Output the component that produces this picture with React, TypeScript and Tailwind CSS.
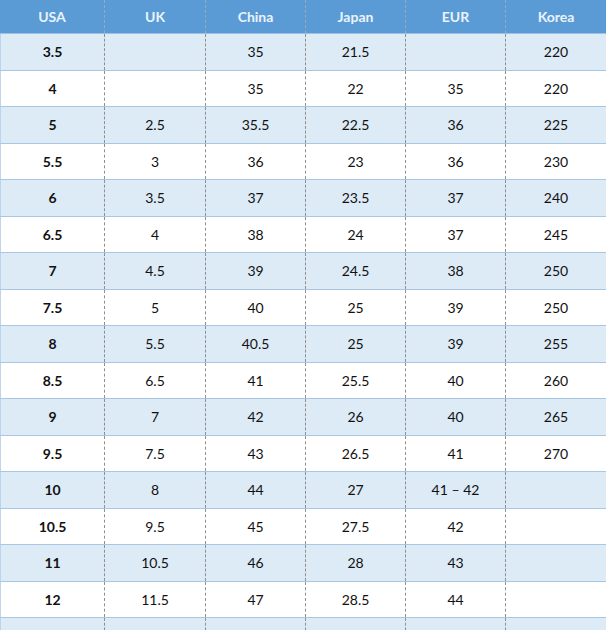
const headers = ["USA", "UK", "China", "Japan", "EUR", "Korea"];

const rows = [
  ["3.5", "", "35", "21.5", "", "220"],
  ["4", "", "35", "22", "35", "220"],
  ["5", "2.5", "35.5", "22.5", "36", "225"],
  ["5.5", "3", "36", "23", "36", "230"],
  ["6", "3.5", "37", "23.5", "37", "240"],
  ["6.5", "4", "38", "24", "37", "245"],
  ["7", "4.5", "39", "24.5", "38", "250"],
  ["7.5", "5", "40", "25", "39", "250"],
  ["8", "5.5", "40.5", "25", "39", "255"],
  ["8.5", "6.5", "41", "25.5", "40", "260"],
  ["9", "7", "42", "26", "40", "265"],
  ["9.5", "7.5", "43", "26.5", "41", "270"],
  ["10", "8", "44", "27", "41 – 42", ""],
  ["10.5", "9.5", "45", "27.5", "42", ""],
  ["11", "10.5", "46", "28", "43", ""],
  ["12", "11.5", "47", "28.5", "44", ""],
  ["", "", "", "", "", ""],
];

const cols = "grid grid-cols-[104px_101px_100px_100px_100px_101px]";

export default function App() {
  return (
    <div
      className="w-[606px] h-[630px] overflow-hidden bg-white text-[14px] text-[#111]"
      style={{ fontFamily: "Lato, 'Open Sans', sans-serif" }}
    >
      <div className={`${cols} h-[34px] bg-[#5b9bd5] border-b border-[#9bc2e6]`}>
        {headers.map((h, i) => (
          <div
            key={h}
            className={`flex items-center justify-center font-bold text-[#eaf3fb] ${
              i > 0 ? "border-l border-dashed border-[#9aa8b8]" : ""
            }`}
          >
            {h}
          </div>
        ))}
      </div>
      {rows.map((r, ri) => (
        <div
          key={ri}
          className={`${cols} h-[36.5px] border-b border-[#a9c6e3] ${
            ri % 2 === 0 ? "bg-[#ddebf7]" : "bg-white"
          }`}
        >
          {r.map((c, ci) => (
            <div
              key={ci}
              className={`flex items-center justify-center ${
                ci === 0 ? "font-bold border-l border-[#bcd4ec]" : "border-l border-dashed border-[#8f8f8f]"
              }`}
            >
              {c}
            </div>
          ))}
        </div>
      ))}
    </div>
  );
}
